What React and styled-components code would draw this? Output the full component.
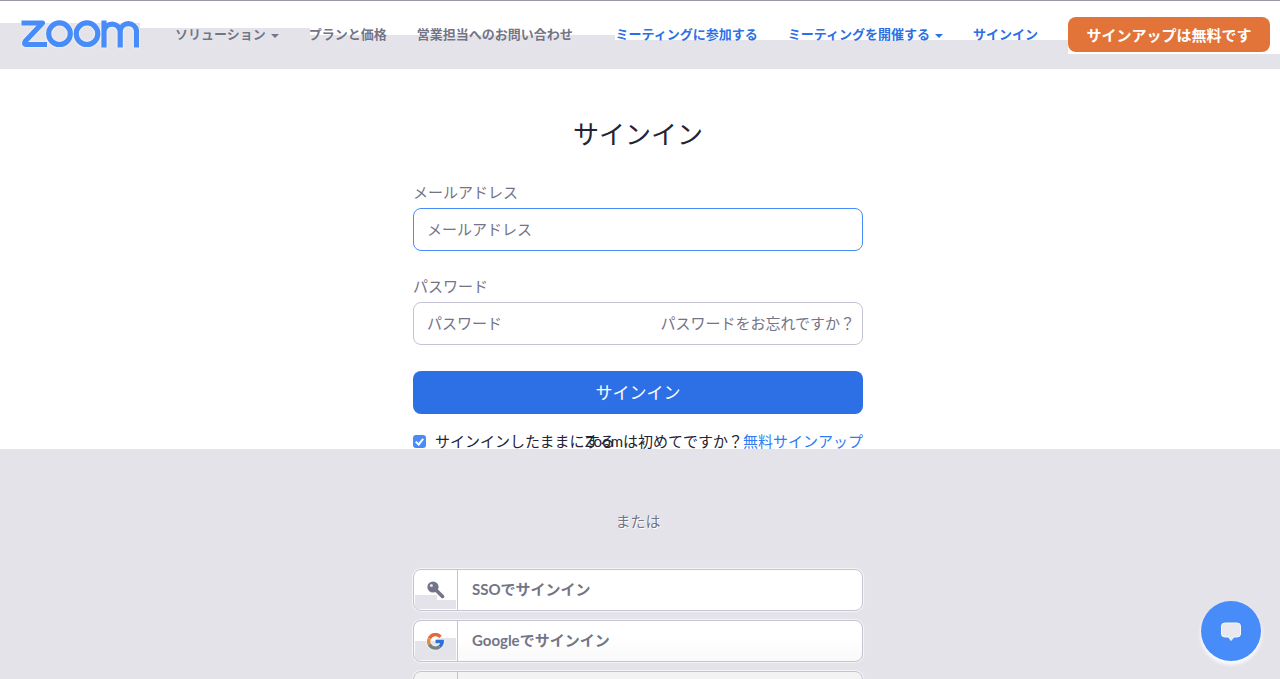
import React from "react";
import styled, { createGlobalStyle } from "styled-components";

const gray = "#e4e3e9";
const muted = "#747487";
const blue = "#2d70e6";
const sky = "#478cf8";
const line = "#c4c3d2";

const GlobalStyle = createGlobalStyle`
  *, *::before, *::after { box-sizing: border-box; }
  body {
    margin: 0;
    background: ${gray};
    color: #232333;
    font-family: Lato, "Noto Sans CJK JP", sans-serif;
    font-size: 15px;
    line-height: 20px;
  }
  a { color: inherit; text-decoration: none; }
  button, input { font: inherit; }
`;

const shade = (x, y, w) =>
  `linear-gradient(${gray}, ${gray}) ${x}px ${y}px / ${w} 100px no-repeat`;

const Header = styled.header`
  display: flex;
  align-items: center;
  height: 69px;
  padding: 0 10px 1px 21px;
  border-top: 1px solid #9a98a8;
  background:
    ${shade(0, 22, "140px")},
    ${shade(140, 27, "170px")},
    ${shade(310, 34, "305px")},
    ${shade(615, 39, "453px")},
    ${shade(1068, 53, "100%")},
    #fff;
`;

const Logo = styled.a`
  display: block;
  height: 30px;
  margin-right: 36px;
  filter: drop-shadow(0 0 1px #fff);
  svg { display: block; }
`;

const Nav = styled.nav`
  display: flex;
  align-items: center;
  gap: 30px;
  margin-left: ${(p) => (p.$end ? "auto" : "0")};
  color: ${(p) => (p.$end ? blue : muted)};
  font-size: 13px;
  font-weight: 700;
  white-space: nowrap;
  text-shadow: 0 0 1px #fff;
`;

const NavLink = styled.a`
  display: flex;
  align-items: center;
  gap: 5px;
  padding-bottom: 2px;
`;

const Caret = styled.span`
  margin-top: 4px;
  border: 4px solid transparent;
  border-top-color: currentColor;
  border-bottom: 0;
`;

const SignUp = styled.button`
  width: 202px;
  height: 35px;
  padding: 0;
  border: 0;
  border-radius: 8px;
  background: #e37439;
  box-shadow: 0 1px 1px #fff;
  color: #fff;
  font-size: 15px;
  font-weight: 700;
`;

const FormArea = styled.form`
  padding: 45px 4px 0 0;
  background: #fff;
`;

const Column = styled.div`
  width: 450px;
  max-width: 100%;
  margin: 0 auto;
`;

const Title = styled.h1`
  margin: 0 0 28px;
  font-size: 26px;
  font-weight: 400;
  line-height: 40px;
  text-align: center;
`;

const Field = styled.div`
  margin-bottom: 25px;
`;

const Label = styled.label`
  display: block;
  margin-bottom: 6px;
  color: ${muted};
`;

const InputBox = styled.div`
  display: flex;
  align-items: center;
  height: 43px;
  padding: 0 7px 1px 13px;
  border: 1px solid ${(p) => (p.$active ? sky : line)};
  border-radius: 8px;
  color: ${muted};
`;

const Input = styled.input`
  flex: 1;
  min-width: 0;
  padding: 0;
  border: 0;
  outline: 0;
  background: none;
  color: #232333;
  &::placeholder { color: ${muted}; opacity: 1; }
`;

const Submit = styled.button`
  display: block;
  width: 100%;
  height: 43px;
  margin-top: 26px;
  border: 0;
  border-radius: 8px;
  background: ${blue};
  color: #fff;
  font-size: 17px;
`;

const Options = styled.div`
  display: flex;
  padding-top: 20px;
  line-height: 15px;
  white-space: nowrap;
`;

const Remember = styled.label`
  flex: 1;
  min-width: 0;
  display: flex;
  align-items: center;
  gap: 9px;
`;

const Check = styled.input`
  appearance: none;
  flex: none;
  width: 13px;
  height: 13px;
  margin: 0;
  border-radius: 3px;
  background: ${sky};
  display: grid;
  place-items: center;
  &:checked::before {
    content: "";
    width: 5px;
    height: 8px;
    margin-bottom: 2px;
    border: solid #fff;
    border-width: 0 2px 2px 0;
    transform: rotate(40deg);
  }
`;

const FreeLink = styled.a`
  color: #2f7bf5;
`;

const Alternatives = styled.section`
  padding: 62px 4px 9px 0;
`;

const Divider = styled.p`
  margin: 0 0 38px;
  color: ${muted};
  text-align: center;
  text-shadow: 0 0 1px #fff, 1px 1px 0 #fff;
`;

const Providers = styled.div`
  display: grid;
  gap: 9px;
`;

const Provider = styled.button`
  display: flex;
  align-items: center;
  width: 100%;
  height: 42px;
  padding: 0;
  border: 1px solid ${line};
  border-radius: 8px;
  background: ${(p) => p.$fill};
  box-shadow: 0 0 1px 1px #f6f6f9;
  color: ${muted};
  font-weight: 700;
  line-height: 20px;
  text-align: left;
`;

const ProviderName = styled.span`
  padding-bottom: 2px;
`;

const ProviderIcon = styled.span`
  display: grid;
  place-items: center;
  width: 44px;
  height: 100%;
  margin-right: 14px;
  border-right: 1px solid ${line};
  border-radius: 7px 0 0 7px;
  background:
    linear-gradient(${gray}, ${gray}) 1px ${(p) => p.$split}px / 22px ${(p) => 39 - p.$split}px no-repeat,
    linear-gradient(${gray}, ${gray}) 23px ${(p) => p.$split + p.$step}px / 19px ${(p) => 39 - p.$split - p.$step}px no-repeat;
  svg { filter: drop-shadow(0 0 1px #fff); }
`;

const Chat = styled.button`
  position: fixed;
  right: 19px;
  bottom: 18px;
  display: grid;
  place-items: center;
  width: 60px;
  height: 60px;
  padding: 2px 0 0;
  border: 0;
  border-radius: 50%;
  background: ${sky};
  box-shadow: 0 3px 3px 1px #f8f8fa;
`;

const ZoomLogo = () => (
  <svg width="118" height="28" viewBox="0 0 118 28" fill="none" stroke={sky} strokeWidth="5.200">
    <path d="M.5 3H21.500L4.500 21Q2 24.500 6 24.500H26" strokeLinejoin="round" />
    <circle cx="38.500" cy="13.700" r="10.800" />
    <circle cx="66" cy="13.700" r="10.800" />
    <path d="M83 .5V27.500M83 11A8.200 8.200 0 0 1 99.200 11V27.500M99.200 11A8.200 8.200 0 0 1 115.500 11V27.500" />
  </svg>
);

const KeyIcon = () => (
  <svg width="18" height="18" viewBox="0 0 18 18">
    <path d="M8 8L15.500 15.500" stroke={muted} strokeWidth="3.600" strokeLinecap="round" />
    <circle cx="6" cy="6" r="5.600" fill={muted} />
    <circle cx="4.400" cy="4.400" r="1.500" fill="#dfe3f2" />
  </svg>
);

const GoogleIcon = () => (
  <svg width="17" height="17" viewBox="0 0 17 17" fill="none" strokeWidth="3.400">
    <path d="M13.500 3.800A6.700 6.700 0 0 0 2.300 5.700" stroke="#e8663a" />
    <path d="M2.300 5.700A6.700 6.700 0 0 0 2.300 11.300" stroke="#e88a3c" />
    <path d="M2.300 11.300A6.700 6.700 0 0 0 12.600 13.600" stroke="#75837f" />
    <path d="M12.600 13.600A6.700 6.700 0 0 0 15.200 8.500H8.500" stroke="#2f6fd8" />
  </svg>
);

const FacebookIcon = () => (
  <svg width="17" height="17" viewBox="0 0 17 17">
    <circle cx="8.500" cy="8.500" r="8.500" fill={blue} />
    <path d="M9 17V7q0-2 3-2M6 9h5" fill="none" stroke="#fff" strokeWidth="2" />
  </svg>
);

export default function App() {
  return (
    <>
      <GlobalStyle />
      <Header>
        <Logo href="#" aria-label="Zoom"><ZoomLogo /></Logo>
        <Nav>
          <NavLink href="#">ソリューション<Caret /></NavLink>
          <NavLink href="#">プランと価格</NavLink>
          <NavLink href="#">営業担当へのお問い合わせ</NavLink>
        </Nav>
        <Nav $end>
          <NavLink href="#">ミーティングに参加する</NavLink>
          <NavLink href="#">ミーティングを開催する<Caret /></NavLink>
          <NavLink href="#">サインイン</NavLink>
          <SignUp type="button">サインアップは無料です</SignUp>
        </Nav>
      </Header>
      <main>
        <FormArea onSubmit={(e) => e.preventDefault()}>
          <Column>
            <Title>サインイン</Title>
            <Field>
              <Label htmlFor="email">メールアドレス</Label>
              <InputBox $active>
                <Input id="email" type="email" placeholder="メールアドレス" />
              </InputBox>
            </Field>
            <Field>
              <Label htmlFor="password">パスワード</Label>
              <InputBox>
                <Input id="password" type="password" placeholder="パスワード" />
                <a href="#">パスワードをお忘れですか？</a>
              </InputBox>
            </Field>
            <Submit type="submit">サインイン</Submit>
            <Options>
              <Remember>
                <Check type="checkbox" defaultChecked />
                サインインしたままにする
              </Remember>
              <span>
                Zoomは初めてですか？<FreeLink href="#">無料サインアップ</FreeLink>
              </span>
            </Options>
          </Column>
        </FormArea>
        <Alternatives>
          <Column>
            <Divider>または</Divider>
            <Providers>
              <Provider type="button" $fill="#fff">
                <ProviderIcon $split={25} $step={5}><KeyIcon /></ProviderIcon>
                <ProviderName>SSOでサインイン</ProviderName>
              </Provider>
              <Provider type="button" $fill="linear-gradient(#fff 40%, #f9f9f9)">
                <ProviderIcon $split={20} $step={-3}><GoogleIcon /></ProviderIcon>
                <ProviderName>Googleでサインイン</ProviderName>
              </Provider>
              <Provider type="button" $fill="#f3f3f3">
                <ProviderIcon $split={20} $step={0}><FacebookIcon /></ProviderIcon>
                <ProviderName>Facebookでサインイン</ProviderName>
              </Provider>
            </Providers>
          </Column>
        </Alternatives>
      </main>
      <Chat type="button" aria-label="チャット">
        <svg width="20" height="20" viewBox="0 0 20 20" fill="#e9e8ee" stroke="#f8f8fb" strokeWidth="1">
          <path d="M4 1H16Q19.500 1 19.500 4V12Q19.500 15 16 15H13L10 18.500 7.500 15H4Q.5 15 .5 12V4Q.5 1 4 1Z" />
        </svg>
      </Chat>
    </>
  );
}
